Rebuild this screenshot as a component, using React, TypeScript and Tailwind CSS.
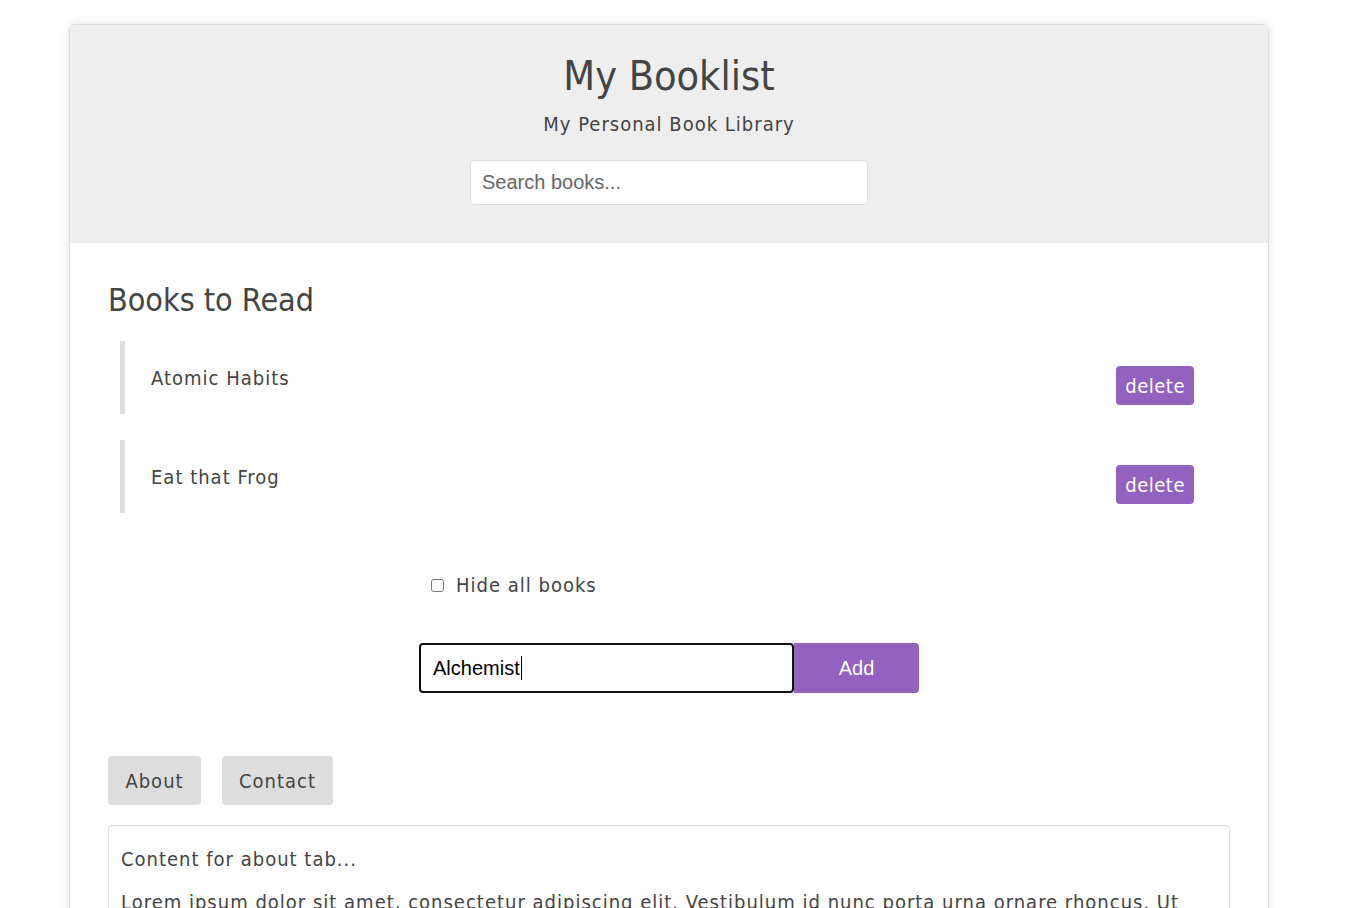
import React from "react";

const font = { fontFamily: '"DejaVu Sans Condensed", "DejaVu Sans", sans-serif' };
const arial = { fontFamily: '"Liberation Sans", Arial, sans-serif' };

export default function App() {
  const books = ["Atomic Habits", "Eat that Frog"];
  return (
    <div className="min-h-[908px] bg-white pt-[24px] text-[#444]" style={font}>
      <div className="ml-[69px] w-[1200px] overflow-hidden rounded-[6px] border border-[#ddd] shadow-[0_0_8px_rgba(0,0,0,0.12)]">
        <header className="flex h-[218px] flex-col items-center bg-[#eeeeee] pt-[25px]">
          <h1 className="text-[41px] leading-[52px] text-[#444]">My Booklist</h1>
          <p className="mt-[9px] text-[20px] leading-[26px] tracking-[1px]">My Personal Book Library</p>
          <input
            className="mt-[23px] h-[45px] w-[398px] rounded-[4px] border border-[#ddd] bg-white px-[11px] text-[20px] text-[#444] placeholder:text-[#666] outline-none"
            style={arial}
            placeholder="Search books..."
          />
        </header>
        <main className="px-[38px] pt-[37px]">
          <h2 className="text-[32px] leading-[40px]">Books to Read</h2>
          <ul className="mt-[21px] flex flex-col gap-[26px] pl-[12px] pr-[36px]">
            {books.map((b) => (
              <li key={b} className="flex h-[73px] items-start justify-between border-l-[5px] border-[#ddd] pl-[26px] pt-[24px]">
                <span className="text-[20px] leading-[26px] tracking-[1px]">{b}</span>
                <button className="mt-[1px] h-[39px] rounded-[4px] bg-[#9361bf] px-[9px] text-[20px] tracking-[0.5px] text-white">delete</button>
              </li>
            ))}
          </ul>
          <div className="mt-[59px] flex items-center pl-[323px]">
            <input type="checkbox" className="h-[13px] w-[13px]" />
            <span className="ml-[12px] text-[20px] leading-[26px] tracking-[1px]">Hide all books</span>
          </div>
          <div className="mt-[45px] flex justify-center">
            <div className="flex">
              <div className="flex h-[50px] w-[375px] items-center rounded-[4px] border-2 border-[#111] px-[12px] text-[20px] text-black" style={arial}>
                Alchemist<span className="ml-[1px] inline-block h-[24px] w-[1px] bg-black" />
              </div>
              <button className="h-[50px] w-[125px] rounded-r-[4px] bg-[#9361bf] text-[20px] text-white" style={arial}>Add</button>
            </div>
          </div>
          <div className="mt-[63px] flex gap-[21px]">
            <button className="h-[49px] w-[93px] rounded-[4px] bg-[#ddd] text-[20px] tracking-[1px] text-[#444]">About</button>
            <button className="h-[49px] w-[111px] rounded-[4px] bg-[#ddd] text-[20px] tracking-[1px] text-[#444]">Contact</button>
          </div>
          <div className="mt-[20px] rounded-[4px] border border-[#ddd] px-[12px] pt-[20px] pb-[20px]">
            <p className="text-[20px] leading-[26px] tracking-[1px]">Content for about tab...</p>
            <p className="mt-[15px] text-[20px] leading-[30px] tracking-[1px]">
              Lorem ipsum dolor sit amet, consectetur adipiscing elit. Vestibulum id nunc porta urna ornare rhoncus. Ut
              condimentum, lorem at vulputate hendrerit, nisl sapien fermentum nibh, sed luctus neque turpis vel mauris.
            </p>
          </div>
        </main>
      </div>
    </div>
  );
}
